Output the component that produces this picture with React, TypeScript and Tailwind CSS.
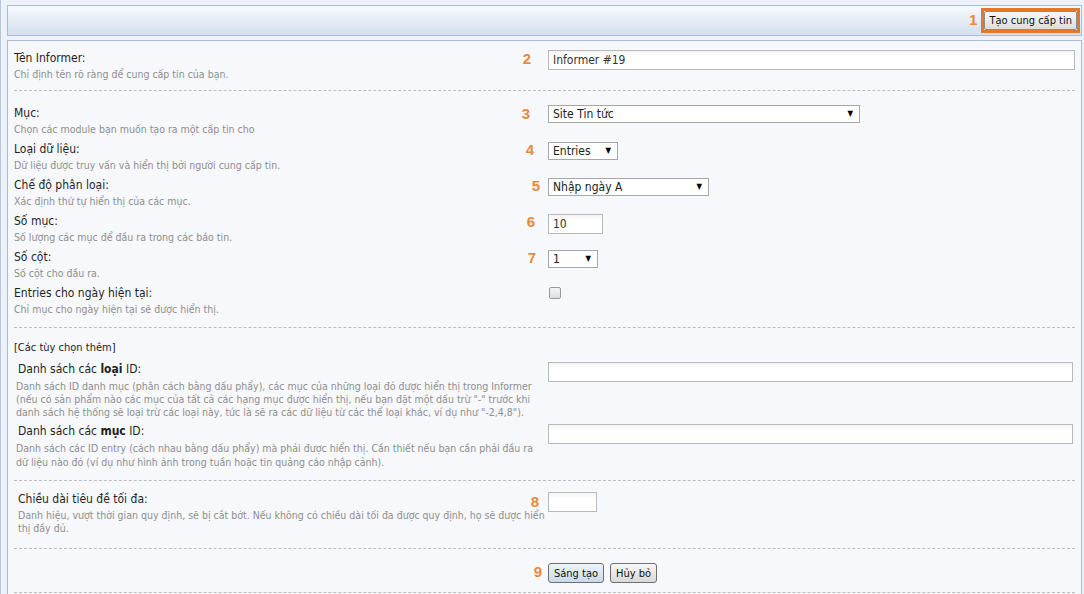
import React from "react";

const baseFont = "font-['DejaVu_Sans_Condensed','Liberation_Sans',sans-serif]";

const Num: React.FC<{ n: string; mr: string; top?: string }> = ({ n, mr, top = "top-[0px]" }) => (
  <span
    className={`absolute right-full ${mr} ${top} font-['Liberation_Sans',sans-serif] text-[15px] font-bold leading-[18px] text-[#e98a3a]`}
  >
    {n}
  </span>
);

const Select: React.FC<{ value: string; w: string }> = ({ value, w }) => (
  <div
    className={`${w} flex h-[18px] items-center justify-between border border-[#a7a7a7] bg-white pl-[4px] pr-[6px] text-[12px] leading-none text-[#222]`}
  >
    <span>{value}</span>
    <span className="text-[8px] text-black">▼</span>
  </div>
);

const TextInput: React.FC<{ value?: string; w: string }> = ({ value, w }) => (
  <div
    className={`${w} flex h-[20px] items-center border border-[#b9b9b9] bg-gradient-to-b from-[#f4f4f4] to-white to-[30%] pl-[4px] text-[12px] leading-none text-[#333]`}
  >
    {value}
  </div>
);

const Label: React.FC<{ children: React.ReactNode }> = ({ children }) => (
  <div className="text-[12px] leading-[16px] text-[#1f1f1f]">{children}</div>
);

const Desc: React.FC<{ children: React.ReactNode }> = ({ children }) => (
  <div className="text-[10.5px] leading-[16px] text-[#8e8e8e]">{children}</div>
);

const Divider = () => <div className="border-b border-dashed border-[#b7bfc8]" />;

export default function App() {
  return (
    <div className={`${baseFont} min-h-[594px] overflow-hidden border-l border-[#b4c6dc] bg-[#eef2f8] pl-[6px] pr-[2px] pt-[5px]`}>
      {/* header bar */}
      <div className="flex h-[31px] items-center justify-end border border-[#a9bed6] bg-gradient-to-b from-[#f8fafd] to-[#d3e0ef] pr-[1px]">
        <span className="mr-[4px] font-['Liberation_Sans',sans-serif] text-[15px] font-bold text-[#e98a3a]">1</span>
        <div className="border-[3px] border-[#e0782e]">
          <button className="block h-[19px] rounded-[2px] border border-[#8d8d8d] bg-gradient-to-b from-[#f9f9f9] to-[#dcdcdc] px-[4px] text-[11px] leading-none text-[#111]">
            Tạo cung cấp tin
          </button>
        </div>
      </div>

      {/* form panel */}
      <div className="mt-[4px] min-h-[560px] border border-[#a9bed6] bg-[#f6f8fb] px-[6px]">
        {/* name */}
        <div className="flex pt-[9px] pb-[8px]">
          <div className="w-[534px]">
            <Label>Tên Informer:</Label>
            <Desc>Chỉ định tên rõ ràng để cung cấp tin của bạn.</Desc>
          </div>
          <div className="relative flex-1">
            <Num n="2" mr="mr-[17px]" />
            <TextInput value="Informer #19" w="w-full" />
          </div>
        </div>
        <Divider />

        {/* main options */}
        <div className="flex flex-col gap-[4px] pt-[14px] pb-[10px]">
          <div className="flex">
            <div className="w-[534px]">
              <Label>Mục:</Label>
              <Desc>Chọn các module bạn muốn tạo ra một cấp tin cho</Desc>
            </div>
            <div className="relative flex-1">
              <Num n="3" mr="mr-[18px]" />
              <Select value="Site Tin tức" w="w-[312px]" />
            </div>
          </div>
          <div className="flex">
            <div className="w-[534px]">
              <Label>Loại dữ liệu:</Label>
              <Desc>Dữ liệu được truy vấn và hiển thị bởi người cung cấp tin.</Desc>
            </div>
            <div className="relative flex-1 pt-[1px]">
              <Num n="4" mr="mr-[14px]" />
              <Select value="Entries" w="w-[70px]" />
            </div>
          </div>
          <div className="flex">
            <div className="w-[534px]">
              <Label>Chế độ phân loại:</Label>
              <Desc>Xác định thứ tự hiển thị của các mục.</Desc>
            </div>
            <div className="relative flex-1 pt-[1px]">
              <Num n="5" mr="mr-[8px]" />
              <Select value="Nhập ngày A" w="w-[161px]" />
            </div>
          </div>
          <div className="flex">
            <div className="w-[534px]">
              <Label>Số mục:</Label>
              <Desc>Số lượng các mục để đầu ra trong các báo tin.</Desc>
            </div>
            <div className="relative flex-1 pt-[1px]">
              <Num n="6" mr="mr-[13px]" />
              <TextInput value="10" w="w-[55px]" />
            </div>
          </div>
          <div className="flex">
            <div className="w-[534px]">
              <Label>Số cột:</Label>
              <Desc>Số cột cho đầu ra.</Desc>
            </div>
            <div className="relative flex-1 pt-[1px]">
              <Num n="7" mr="mr-[12px]" />
              <Select value="1" w="w-[50px]" />
            </div>
          </div>
          <div className="flex">
            <div className="w-[534px]">
              <Label>Entries cho ngày hiện tại:</Label>
              <Desc>Chỉ mục cho ngày hiện tại sẽ được hiển thị.</Desc>
            </div>
            <div className="flex-1 pt-[2px] pl-[1px]">
              <div className="h-[12px] w-[12px] rounded-[2px] border border-[#9a9a9a] bg-gradient-to-b from-[#f4f4f4] to-[#dedede]" />
            </div>
          </div>
        </div>
        <Divider />

        {/* extra options */}
        <div className="pt-[13px] pb-[11px]">
          <div className="text-[11px] leading-[14px] text-[#222]">[Các tùy chọn thêm]</div>
          <div className="flex flex-col gap-[4px] pt-[6px] pl-[2px]">
            <div className="flex">
              <div className="w-[532px]">
                <div className="pl-[2px]">
                  <Label>
                    Danh sách các <b>loại</b> ID:
                  </Label>
                </div>
                <div className="pt-[3px] text-[10.5px] leading-[13px] text-[#8e8e8e]">
                  Danh sách ID danh mục (phân cách bằng dấu phẩy), các mục của những loại đó được hiển thị trong Informer
                  <br />
                  (nếu có sản phẩm nào các mục của tất cả các hạng mục được hiển thị, nếu bạn đặt một dấu trừ "-" trước khi
                  <br />
                  danh sách hệ thống sẽ loại trừ các loại này, tức là sẽ ra các dữ liệu từ các thể loại khác, ví dụ như "-2,4,8").
                </div>
              </div>
              <div className="flex-1 pt-[1px] pr-[2px]">
                <TextInput w="w-full" />
              </div>
            </div>
            <div className="flex">
              <div className="w-[532px]">
                <div className="pl-[2px]">
                  <Label>
                    Danh sách các <b>mục</b> ID:
                  </Label>
                </div>
                <div className="pt-[2px] text-[10.5px] leading-[14px] text-[#8e8e8e]">
                  Danh sách các ID entry (cách nhau bằng dấu phẩy) mà phải được hiển thị. Cần thiết nếu bạn cần phải đầu ra
                  <br />
                  dữ liệu nào đó (ví dụ như hình ảnh trong tuần hoặc tin quảng cáo nhập cảnh).
                </div>
              </div>
              <div className="flex-1 pt-[1px] pr-[2px]">
                <TextInput w="w-full" />
              </div>
            </div>
          </div>
        </div>
        <Divider />

        {/* title length */}
        <div className="flex pt-[10px] pb-[13px] pl-[4px]">
          <div className="w-[530px]">
            <Label>Chiều dài tiêu đề tối đa:</Label>
            <div className="pt-[2px] text-[10.5px] leading-[13px] text-[#8e8e8e]">
              Danh hiệu, vượt thời gian quy định, sẽ bị cắt bớt. Nếu không có chiều dài tối đa được quy định, họ sẽ được hiển
              <br />
              thị đầy đủ.
            </div>
          </div>
          <div className="relative flex-1 pt-[1px]">
            <Num n="8" mr="mr-[9px]" top="top-[2px]" />
            <TextInput w="w-[49px]" />
          </div>
        </div>
        <Divider />

        {/* actions */}
        <div className="flex pt-[14px] pb-[9px]">
          <div className="w-[534px]" />
          <div className="relative flex flex-1 gap-[6px]">
            <Num n="9" mr="mr-[6px]" />
            <button className="h-[20px] rounded-[3px] border border-[#6f6f6f] bg-gradient-to-b from-[#eef4fa] to-[#c9d9ea] px-[5px] text-[11px] leading-none text-[#111]">
              Sáng tạo
            </button>
            <button className="h-[20px] rounded-[3px] border border-[#6f6f6f] bg-gradient-to-b from-[#f7f7f7] to-[#d9d9d9] px-[5px] text-[11px] leading-none text-[#111]">
              Hủy bỏ
            </button>
          </div>
        </div>
        <Divider />
      </div>
    </div>
  );
}
